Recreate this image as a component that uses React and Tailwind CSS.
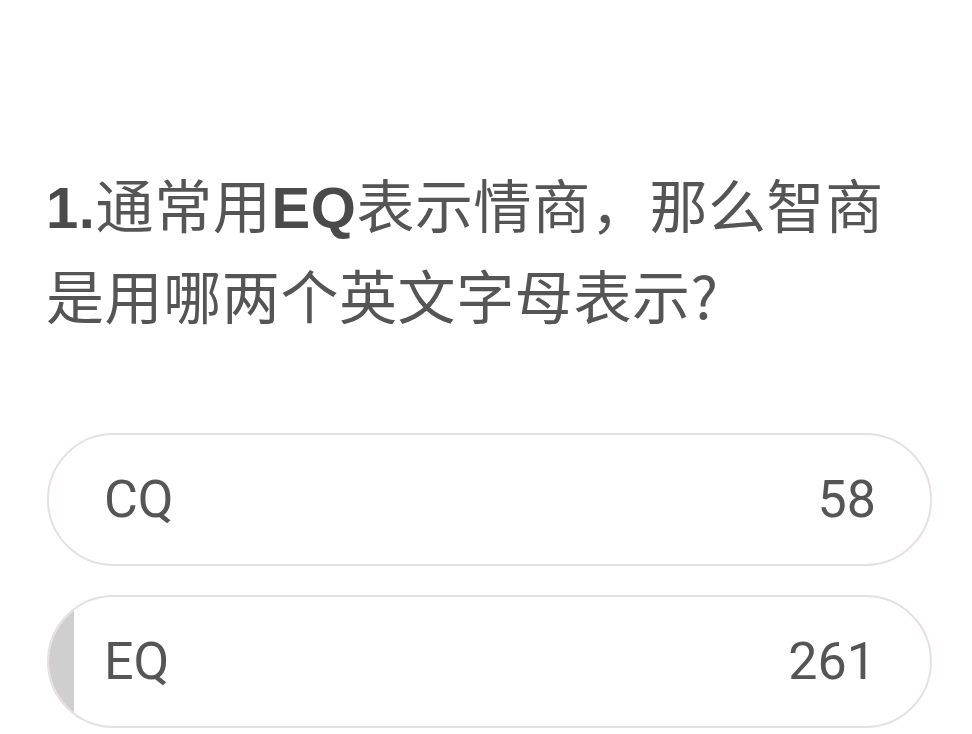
export default function App() {
  const options = [
    { label: "CQ", count: 58, fill: 0 },
    { label: "EQ", count: 261, fill: 25 },
  ];
  return (
    <div className="w-[972px] h-[734px] bg-white overflow-hidden font-['Noto_Sans_CJK_SC','Noto_Sans',sans-serif]">
      <div className="pl-[46px] pr-[40px] pt-[160px]">
        <p className="text-[58px] leading-[87px] text-[#555555] tracking-[0.6px]">
          <span className="font-bold text-[#4a4a4a] font-['Liberation_Sans',Arial,sans-serif]">1.</span>
          通常用
          <span className="font-bold text-[#4a4a4a] font-['Liberation_Sans',Arial,sans-serif]">EQ</span>
          表示情商，那么智商是用哪两个英文字母表示?
        </p>
        <div className="mt-[95px] flex flex-col gap-[29px] pl-[1px]">
          {options.map((o) => (
            <div key={o.label} className="relative h-[133px] rounded-full border-2 border-[#e6dfe6] overflow-hidden flex items-center justify-between pl-[55px] pr-[54px]">
              {o.fill > 0 && (
                <div className="absolute left-0 top-0 bottom-0 bg-[#cfcfcf]" style={{ width: o.fill }} />
              )}
              <span className="relative text-[52px] text-[#555555] font-['Roboto','Noto_Sans',sans-serif]">{o.label}</span>
              <span className="relative text-[52px] text-[#555555] font-['Roboto','Noto_Sans',sans-serif]">{o.count}</span>
            </div>
          ))}
        </div>
      </div>
    </div>
  );
}
